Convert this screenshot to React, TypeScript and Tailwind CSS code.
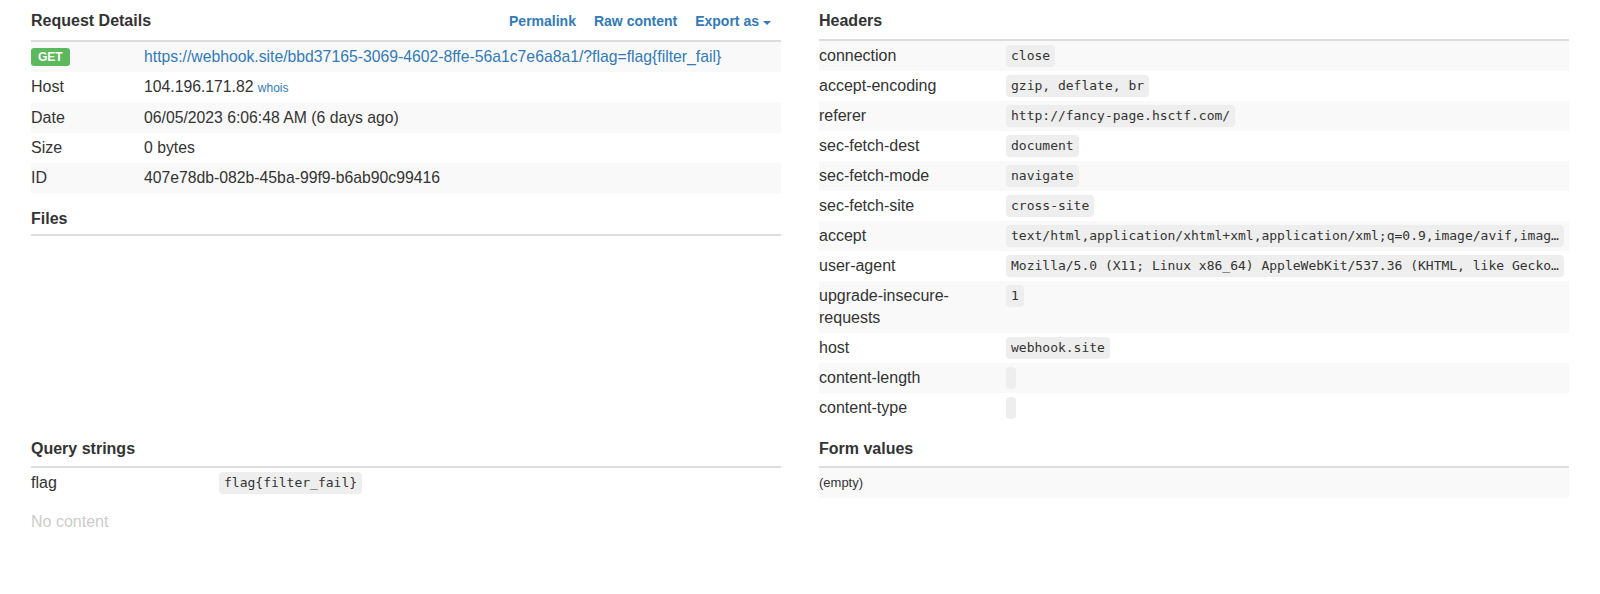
import React from 'react'

const mono = "font-['DejaVu_Sans_Mono','Liberation_Mono',monospace]"

const headers: [string, string][] = [
  ['connection', 'close'],
  ['accept-encoding', 'gzip, deflate, br'],
  ['referer', 'http://fancy-page.hsctf.com/'],
  ['sec-fetch-dest', 'document'],
  ['sec-fetch-mode', 'navigate'],
  ['sec-fetch-site', 'cross-site'],
  [
    'accept',
    'text/html,application/xhtml+xml,application/xml;q=0.9,image/avif,image/webp,image/apng,*/*;q=0.8,application/signed-exchange;v=b3;q=0.7',
  ],
  [
    'user-agent',
    'Mozilla/5.0 (X11; Linux x86_64) AppleWebKit/537.36 (KHTML, like Gecko) HeadlessChrome/114.0.0.0 Safari/537.36',
  ],
  ['upgrade-insecure-requests', '1'],
  ['host', 'webhook.site'],
  ['content-length', ''],
  ['content-type', ''],
]

function Heading({
  title,
  first,
  tight,
  children,
}: {
  title: string
  first?: boolean
  tight?: boolean
  children?: React.ReactNode
}) {
  const spacing = first ? 'pt-[11px] pb-[8px]' : tight ? 'mt-[16px] pb-[5px]' : 'mt-[16px] pb-[7px]'
  return (
    <div className={`flex items-baseline justify-between border-b-2 border-[#ddd] ${spacing}`}>
      <h3 className="text-[16px] font-bold leading-[20px] text-[#333]">{title}</h3>
      {children}
    </div>
  )
}

function Code({ children }: { children?: React.ReactNode }) {
  return (
    <code
      className={`${mono} inline-block h-[22px] max-w-full truncate rounded-[4px] bg-[#eee] px-[5px] align-top text-[13px] leading-[22px] text-[#333]`}
    >
      {children}
    </code>
  )
}

export default function App() {
  return (
    <div className="min-h-[594px] bg-white px-[31px] font-['Liberation_Sans',Arial,sans-serif] text-[16px] text-[#333]">
      <div className="grid grid-cols-2 gap-x-[38px]">
        {/* left, top */}
        <div>
          <Heading title="Request Details" first>
            <div className="flex items-baseline gap-[18px] pr-[10px] text-[14px] font-bold text-[#337ab7]">
              <a href="#">Permalink</a>
              <a href="#">Raw content</a>
              <a href="#" className="flex items-center gap-[4px]">
                Export as
                <span className="mt-[2px] inline-block h-0 w-0 border-x-[4px] border-t-[4px] border-x-transparent border-t-[#337ab7]" />
              </a>
            </div>
          </Heading>
          <div className="grid grid-cols-[113px_1fr] leading-[22px]">
            <div className="flex h-[30px] items-center bg-[#f9f9f9]">
              <span className="inline-block rounded-[3px] bg-[#5cb85c] px-[7px] pt-[3px] pb-[3px] text-[12px] font-bold leading-[12px] text-white">
                GET
              </span>
            </div>
            <div className="truncate bg-[#f9f9f9] py-[4px] text-[15.75px] text-[#337ab7]">
              https://webhook.site/bbd37165-3069-4602-8ffe-56a1c7e6a8a1/?flag=flag{'{'}filter_fail{'}'}
            </div>

            <div className="py-[4px]">Host</div>
            <div className="py-[4px] text-[15.75px]">
              104.196.171.82 <a href="#" className="text-[12px] text-[#337ab7]">whois</a>
            </div>

            <div className="bg-[#f9f9f9] py-[4px]">Date</div>
            <div className="bg-[#f9f9f9] py-[4px] text-[15.75px]">06/05/2023 6:06:48 AM (6 days ago)</div>

            <div className="py-[4px]">Size</div>
            <div className="py-[4px] text-[15.75px]">0 bytes</div>

            <div className="bg-[#f9f9f9] py-[4px]">ID</div>
            <div className="bg-[#f9f9f9] py-[4px] text-[15.75px]">407e78db-082b-45ba-99f9-b6ab90c99416</div>
          </div>
          <Heading title="Files" tight />
        </div>

        {/* right, top */}
        <div>
          <Heading title="Headers" first />
          <div className="grid grid-cols-[187px_minmax(0,1fr)] leading-[22px]">
            {headers.map(([k, v], i) => (
              <React.Fragment key={k}>
                <div className={`py-[4px] pr-[5px] ${i % 2 === 0 ? 'bg-[#f9f9f9]' : ''}`}>{k}</div>
                <div className={`min-w-0 py-[4px] pr-[5px] ${i % 2 === 0 ? 'bg-[#f9f9f9]' : ''}`}>
                  <Code>{v}</Code>
                </div>
              </React.Fragment>
            ))}
          </div>
        </div>

        {/* left, bottom */}
        <div>
          <Heading title="Query strings" />
          <div className="grid grid-cols-[188px_1fr] leading-[22px]">
            <div className="py-[4px]">flag</div>
            <div className="py-[4px]">
              <Code>flag{'{'}filter_fail{'}'}</Code>
            </div>
          </div>
          <p className="mt-[13px] leading-[22px] text-[#ccc]">No content</p>
        </div>

        {/* right, bottom */}
        <div>
          <Heading title="Form values" />
          <div className="flex h-[30px] items-center bg-[#f9f9f9] text-[13px]">(empty)</div>
        </div>
      </div>
    </div>
  )
}
